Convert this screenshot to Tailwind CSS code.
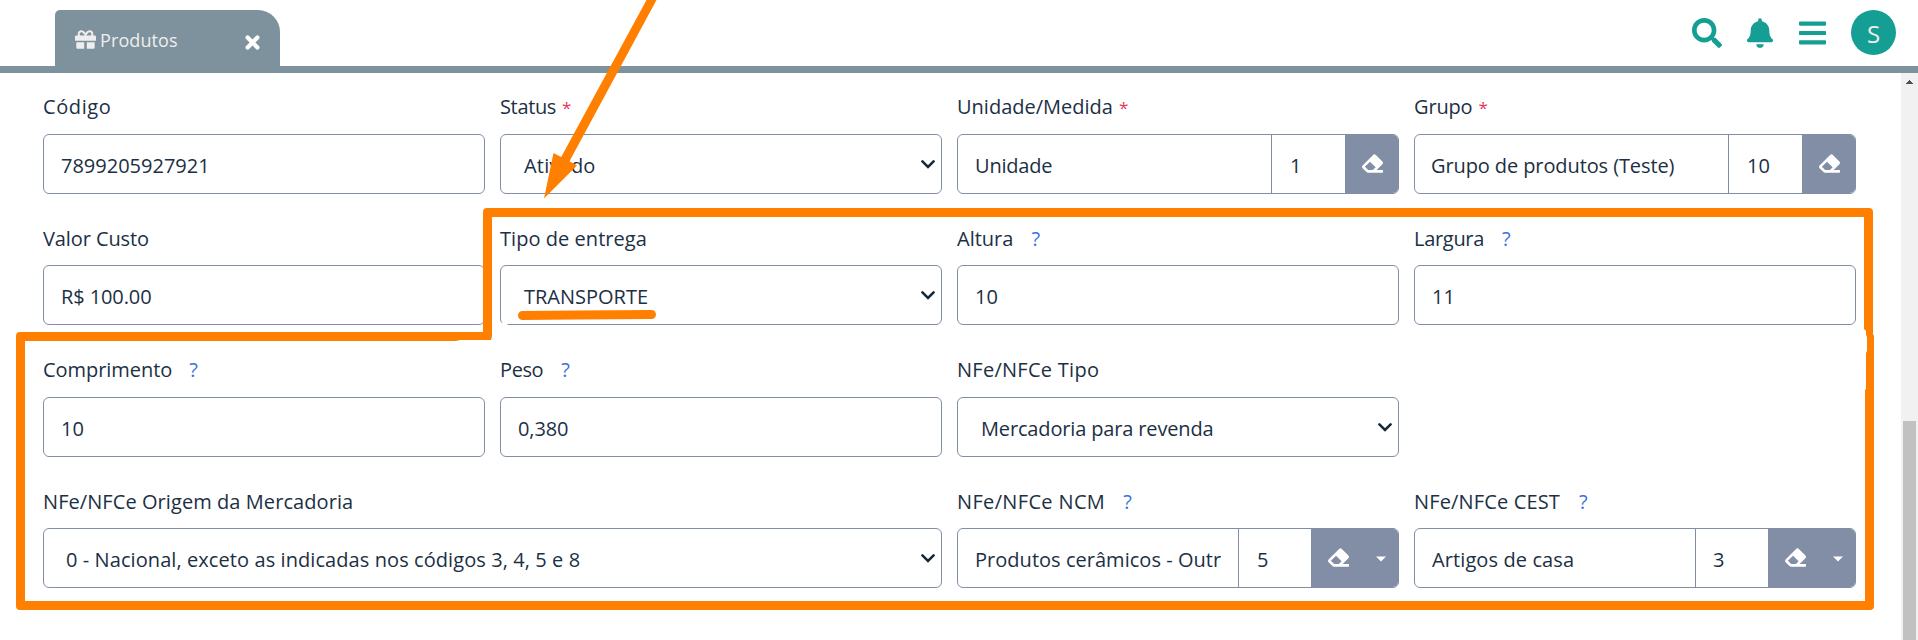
<!DOCTYPE html>
<html lang="pt-BR">
<head>
<meta charset="utf-8">
<title>Produtos</title>
<script src="https://cdn.jsdelivr.net/npm/@tailwindcss/browser@4"></script>
</head>
<body class="relative h-[640px] w-[1918px] overflow-hidden bg-white font-['Open_Sans','Noto_Sans',sans-serif] text-[20px] text-[#1c3044]">
<svg class="hidden">
  <symbol id="eraser" viewBox="0 0 512 512"><path d="M497.941 273.941c18.745-18.745 18.745-49.137 0-67.882l-160-160c-18.745-18.745-49.136-18.746-67.883 0l-256 256c-18.745 18.745-18.745 49.137 0 67.882l96 96A48.004 48.004 0 0 0 144 480h356c6.627 0 12-5.373 12-12v-40c0-6.627-5.373-12-12-12H355.883l142.058-142.059zm-302.627-62.627l137.373 137.373L265.373 416H150.628l-80-80 124.686-124.686z"/></symbol>
  <symbol id="chev" viewBox="0 0 14 9"><path d="M1.4 1.4 7 7l5.600-5.600" fill="none" stroke="#14283c" stroke-width="2.500" stroke-linecap="round"/></symbol>
</svg>

<header class="flex h-[73px] justify-between border-b-[7px] border-[#7d929d] pl-[55px] pr-[22px]">
  <div class="mt-[10px] flex h-[56px] w-[225px] rounded-tl-[5px] rounded-tr-[22px] bg-[#7d929d] pl-[20px] pr-[20px]">
    <svg class="mt-[19px] h-[21px] w-[21px] fill-[#eeeeee]" viewBox="0 0 512 512"><path d="M32 448c0 17.700 14.300 32 32 32h160V320H32v128zm256 32h160c17.700 0 32-14.300 32-32V320H288v160zm192-320h-42.100c6.200-12.100 10.100-25.500 10.100-40 0-48.500-39.500-88-88-88-41.600 0-68.500 21.300-103 68.300-34.500-47-61.400-68.300-103-68.300-48.500 0-88 39.500-88 88 0 14.500 3.800 27.900 10.100 40H32c-17.700 0-32 14.300-32 32v80c0 8.800 7.200 16 16 16h480c8.800 0 16-7.200 16-16v-80c0-17.700-14.300-32-32-32zm-326.100 0c-22.100 0-40-17.900-40-40s17.900-40 40-40c19.900 0 34.600 3.300 86.100 80h-86.100zm206.100 0h-86.100c51.400-76.500 65.700-80 86.100-80 22.100 0 40 17.900 40 40s-17.900 40-40 40z"/></svg>
    <span class="ml-[4px] mt-[15px] text-[18px] leading-[30px] tracking-[0.1px] text-[#eeeeee]">Produtos</span>
    <svg class="ml-auto mt-[25px] h-[15px] w-[15px]" viewBox="0 0 15 15"><path d="M2.600 2.600l9.800 9.800M12.400 2.600l-9.800 9.800" stroke="#fff" stroke-width="4.200" stroke-linecap="round"/></svg>
  </div>
  <div class="flex fill-[#159e93]">
    <svg class="mt-[18px] h-[30px] w-[30px]" viewBox="0 0 512 512"><path d="M505 442.700L405.300 343c-4.500-4.500-10.600-7-17-7H372c27.600-35.300 44-79.700 44-128C416 93.100 322.900 0 208 0S0 93.100 0 208s93.100 208 208 208c48.300 0 92.700-16.400 128-44v16.300c0 6.400 2.500 12.500 7 17l99.700 99.700c9.400 9.400 24.600 9.400 33.900 0l28.300-28.300c9.400-9.400 9.400-24.600.1-34zM208 336c-70.700 0-128-57.200-128-128 0-70.700 57.200-128 128-128 70.700 0 128 57.200 128 128 0 70.700-57.200 128-128 128z"/></svg>
    <svg class="ml-[25px] mt-[18px] h-[30px] w-[26px]" viewBox="0 0 448 512"><path d="M224 512c35.320 0 63.970-28.650 63.970-64H160.030c0 35.350 28.650 64 63.970 64zm215.390-149.710c-19.320-20.760-55.470-51.990-55.470-154.290 0-77.700-54.480-139.900-127.940-155.160V32c0-17.670-14.320-32-31.980-32s-31.980 14.330-31.980 32v20.840C118.560 68.100 64.080 130.300 64.080 208c0 102.300-36.150 133.530-55.470 154.290-6 6.450-8.660 14.160-8.610 21.710.11 16.400 12.980 32 32.100 32h383.800c19.120 0 32-15.600 32.100-32 .05-7.550-2.610-15.270-8.610-21.710z"/></svg>
    <svg class="ml-[26px] mt-[18px] h-[30px] w-[27px]" viewBox="0 0 448 512" preserveAspectRatio="none"><path d="M16 132h416c8.837 0 16-7.163 16-16V76c0-8.837-7.163-16-16-16H16C7.163 60 0 67.163 0 76v40c0 8.837 7.163 16 16 16zm0 160h416c8.837 0 16-7.163 16-16v-40c0-8.837-7.163-16-16-16H16c-8.837 0-16 7.163-16 16v40c0 8.837 7.163 16 16 16zm0 160h416c8.837 0 16-7.163 16-16v-40c0-8.837-7.163-16-16-16H16c-8.837 0-16 7.163-16 16v40c0 8.837 7.163 16 16 16z"/></svg>
    <div class="ml-[25px] mt-[10px] flex h-[45px] w-[45px] items-center justify-center rounded-full bg-[#159e93] pt-[2px] text-[24px] leading-none text-[#eeeeee]">S</div>
  </div>
</header>

<div class="flex h-[567px]">
  <main class="grid w-[1901px] grid-cols-[repeat(4,442px)] grid-rows-[131px_132px_131px_104px] gap-x-[15px] pl-[43px] pt-[17px]">
    <div>
      <label class="block h-[44px] leading-[33px]"><span class="tracking-[0.6px]">Código</span></label>
      <div class="h-[60px] rounded-[6px] border border-[#828ea6] pl-[17px] leading-[61px]">7899205927921</div>
    </div>
    <div>
      <label class="block h-[44px] leading-[33px]"><span class="tracking-[-0.35px]">Status</span><span class="ml-[6px] text-[17px] text-[#e63757]">*</span></label>
      <div class="flex h-[60px] items-start justify-between rounded-[6px] border border-[#828ea6] pl-[23px] pr-[6px] leading-[61px]"><span class="tracking-[0.2px]">Ativado</span><svg class="mt-[25px] h-[9px] w-[14px]"><use href="#chev"/></svg></div>
    </div>
    <div>
      <label class="block h-[44px] leading-[33px]">Unidade/Medida<span class="ml-[6px] text-[17px] text-[#e63757]">*</span></label>
      <div class="flex h-[60px] overflow-hidden rounded-[6px] border border-[#828ea6] leading-[61px]">
        <div class="w-[314px] border-r border-[#828ea6] px-[17px] tracking-[-0.2px]">Unidade</div>
        <div class="w-[73px] pl-[18px]">1</div>
        <div class="-my-px -mr-px flex flex-1 bg-[#828ea6] pl-[17px] pt-[19px]"><svg class="h-[21px] w-[21px] fill-white"><use href="#eraser"/></svg></div>
      </div>
    </div>
    <div>
      <label class="block h-[44px] leading-[33px]"><span class="tracking-[-0.15px]">Grupo</span><span class="ml-[6px] text-[17px] text-[#e63757]">*</span></label>
      <div class="flex h-[60px] overflow-hidden rounded-[6px] border border-[#828ea6] leading-[61px]">
        <div class="w-[314px] border-r border-[#828ea6] px-[16px] tracking-[-0.1px]">Grupo de produtos (Teste)</div>
        <div class="w-[73px] pl-[18px]">10</div>
        <div class="-my-px -mr-px flex flex-1 bg-[#828ea6] pl-[17px] pt-[19px]"><svg class="h-[21px] w-[21px] fill-white"><use href="#eraser"/></svg></div>
      </div>
    </div>

    <div>
      <label class="block h-[44px] leading-[35px]"><span class="tracking-[-0.1px]">Valor Custo</span></label>
      <div class="h-[60px] rounded-[6px] border border-[#828ea6] pl-[17px] leading-[61px] tracking-[-0.1px]">R$ 100.00</div>
    </div>
    <div>
      <label class="block h-[44px] leading-[35px] tracking-[0.05px]">Tipo de entrega</label>
      <div class="flex h-[60px] items-start justify-between rounded-[6px] border border-[#828ea6] pl-[23px] pr-[6px] leading-[61px]"><span>TRANSPORTE</span><svg class="mt-[25px] h-[9px] w-[14px]"><use href="#chev"/></svg></div>
    </div>
    <div>
      <label class="block h-[44px] leading-[35px]">Altura<span class="ml-[18px] text-[#3a72e0]">?</span></label>
      <div class="h-[60px] rounded-[6px] border border-[#828ea6] pl-[17px] leading-[61px]">10</div>
    </div>
    <div>
      <label class="block h-[44px] leading-[35px]"><span class="tracking-[-0.3px]">Largura</span><span class="ml-[18px] text-[#3a72e0]">?</span></label>
      <div class="h-[60px] rounded-[6px] border border-[#828ea6] pl-[17px] leading-[61px]">11</div>
    </div>

    <div>
      <label class="block h-[44px] leading-[33px]"><span class="tracking-[-0.05px]">Comprimento</span><span class="ml-[17px] text-[#3a72e0]">?</span></label>
      <div class="h-[60px] rounded-[6px] border border-[#828ea6] pl-[17px] leading-[61px]">10</div>
    </div>
    <div>
      <label class="block h-[44px] leading-[33px]"><span class="tracking-[-0.4px]">Peso</span><span class="ml-[18px] text-[#3a72e0]">?</span></label>
      <div class="h-[60px] rounded-[6px] border border-[#828ea6] pl-[17px] leading-[61px] tracking-[-0.1px]">0,380</div>
    </div>
    <div>
      <label class="block h-[44px] leading-[33px]"><span class="tracking-[0.27px]">NFe/NFCe Tipo</span></label>
      <div class="flex h-[60px] items-start justify-between rounded-[6px] border border-[#828ea6] pl-[23px] pr-[6px] leading-[61px]"><span class="tracking-[-0.15px]">Mercadoria para revenda</span><svg class="mt-[25px] h-[9px] w-[14px]"><use href="#chev"/></svg></div>
    </div>
    <div></div>

    <div class="col-span-2">
      <label class="block h-[44px] leading-[35px]"><span class="tracking-[0.07px]">NFe/NFCe Origem da Mercadoria</span></label>
      <div class="flex h-[60px] items-start justify-between rounded-[6px] border border-[#828ea6] pl-[22px] pr-[6px] leading-[61px]"><span class="tracking-[0.08px]">0 - Nacional, exceto as indicadas nos códigos 3, 4, 5 e 8</span><svg class="mt-[25px] h-[9px] w-[14px]"><use href="#chev"/></svg></div>
    </div>
    <div>
      <label class="block h-[44px] leading-[35px]"><span class="tracking-[0.35px]">NFe/NFCe NCM</span><span class="ml-[18px] text-[#3a72e0]">?</span></label>
      <div class="flex h-[60px] overflow-hidden rounded-[6px] border border-[#828ea6] leading-[61px]">
        <div class="w-[281px] border-r border-[#828ea6] px-[17px]"><div class="overflow-hidden whitespace-nowrap tracking-[0.03px]">Produtos cerâmicos - Outras</div></div>
        <div class="w-[72px] pl-[18px]">5</div>
        <div class="-my-px -mr-px flex flex-1 bg-[#828ea6] pl-[17px] pt-[19px]"><svg class="h-[21px] w-[21px] fill-white"><use href="#eraser"/></svg><svg class="ml-[27px] mt-[9px] h-[6px] w-[10px] fill-white" viewBox="0 0 10 6"><path d="M0 .5h10L5 5.500z"/></svg></div>
      </div>
    </div>
    <div>
      <label class="block h-[44px] leading-[35px]"><span class="tracking-[0.15px]">NFe/NFCe CEST</span><span class="ml-[19px] text-[#3a72e0]">?</span></label>
      <div class="flex h-[60px] overflow-hidden rounded-[6px] border border-[#828ea6] leading-[61px]">
        <div class="w-[281px] border-r border-[#828ea6] px-[17px] tracking-[0.1px]">Artigos de casa</div>
        <div class="w-[72px] pl-[17px]">3</div>
        <div class="-my-px -mr-px flex flex-1 bg-[#828ea6] pl-[17px] pt-[19px]"><svg class="h-[21px] w-[21px] fill-white"><use href="#eraser"/></svg><svg class="ml-[27px] mt-[9px] h-[6px] w-[10px] fill-white" viewBox="0 0 10 6"><path d="M0 .5h10L5 5.500z"/></svg></div>
      </div>
    </div>
  </main>
  <aside class="w-[17px] bg-[#f1f1f1] pl-[2px] pt-[7px]">
    <svg class="ml-[3px] h-[4px] w-[7px]" viewBox="0 0 7 4" shape-rendering="crispEdges"><path d="M3 0h1v1h1v1h1v1h1v1H0V3h1V2h1V1h1z" fill="#505050"/></svg>
    <div class="mt-[337px] h-[219px] w-[13px] bg-[#c1c1c1]"></div>
  </aside>
</div>

<!-- hand-drawn annotations over the form -->
<svg class="pointer-events-none absolute left-0 top-0 h-[640px] w-[1918px] fill-[#ff8000]" viewBox="0 0 1918 640">
  <path d="M501.500 322.500h6v3h-6z" fill="#fff"/>
  <path d="M646.500 0H656.500L569.500 161.300L577 165.500L544 198.500L553.500 153L561.200 157z"/>
  <path fill-rule="evenodd" d="M488 208H1869Q1873 208 1873 212V334L1874 336V606Q1874 610 1870 610H20Q16 610 16 606V336Q16 332 20 332H483V212Q483 208 487 208zM492 217V336L491 340H460L456 341H25V601H1865V390L1866 389V353L1867 351V337L1866 335V331L1864 329V217z"/>
  <path d="M522.500 315.500L575 315L651.500 314.500" stroke="#ff8000" stroke-width="9" stroke-linecap="round"/>
</svg>
</body>
</html>
